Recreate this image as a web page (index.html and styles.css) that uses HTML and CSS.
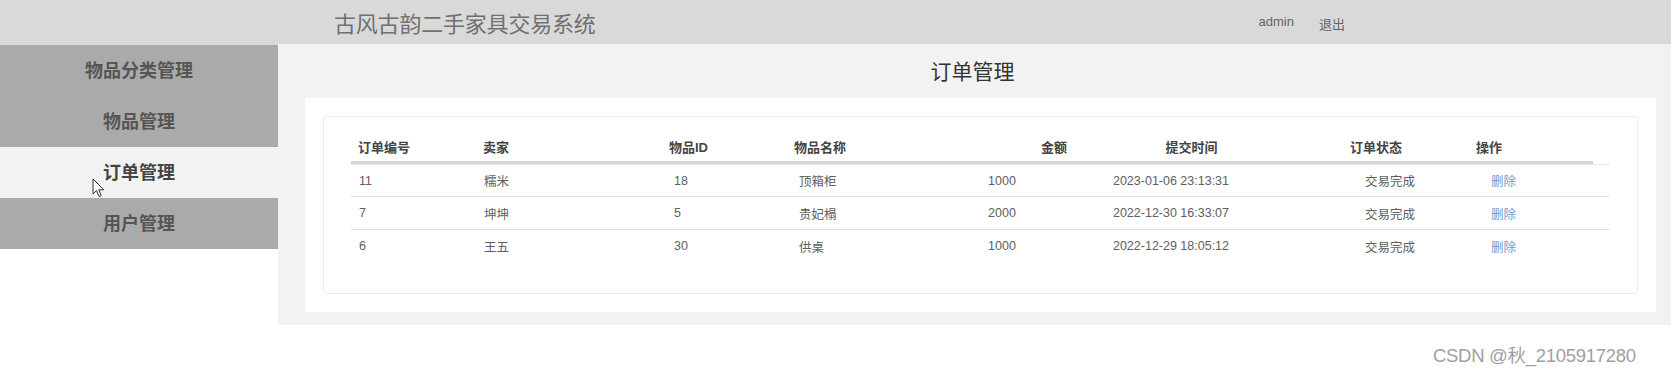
FILE: index.html
```html
<!DOCTYPE html>
<html lang="zh">
<head>
    <meta charset="UTF-8" />
    <meta name="viewport" content="width=device-width, initial-scale=1" />
    <title>订单管理 - 古风古韵二手家具交易系统</title>
    <link rel="stylesheet" href="styles.css">
</head>
<body>
    <div class="topbar">
        <div class="brand">古风古韵二手家具交易系统</div>
        <div class="user-nav">
            <a href="#" class="user">admin</a>
            <a href="#" class="logout">退出</a>
        </div>
    </div>

    <div class="layout">
        <ul class="side-menu">
            <li><a href="#">物品分类管理</a></li>
            <li><a href="#">物品管理</a></li>
            <li class="active"><a href="#">订单管理</a></li>
            <li><a href="#">用户管理</a></li>
        </ul>

        <div class="main">
            <h2 class="page-title">订单管理</h2>
            <div class="panel">
                <div class="card">
                    <div class="grid-head">
                        <div class="cell">订单编号</div>
                        <div class="cell">卖家</div>
                        <div class="cell">物品ID</div>
                        <div class="cell">物品名称</div>
                        <div class="cell center">金额</div>
                        <div class="cell center">提交时间</div>
                        <div class="cell center">订单状态</div>
                        <div class="cell flush">操作</div>
                    </div>
                    <div class="grid-body" id="order-rows">
                        <!-- 订单数据 -->
                    </div>
                </div>
            </div>
        </div>
    </div>

    <svg class="cursor" width="13" height="20" viewBox="0 0 13 20">
        <path d="M1 1 L1 16 L4.5 12.5 L7 18.5 L9.2 17.6 L6.8 11.8 L11.8 11.8 Z" fill="#fff" stroke="#333" stroke-width="1" stroke-linejoin="round"/>
    </svg>

    <div class="watermark">CSDN @秋_2105917280</div>

    <script>
        const pedidos = [
            { id: 11, seller: '糯米', goodsId: 18, name: '顶箱柜', price: 1000, time: '2023-01-06 23:13:31', state: '交易完成' },
            { id: 7, seller: '坤坤', goodsId: 5, name: '贵妃榻', price: 2000, time: '2022-12-30 16:33:07', state: '交易完成' },
            { id: 6, seller: '王五', goodsId: 30, name: '供桌', price: 1000, time: '2022-12-29 18:05:12', state: '交易完成' }
        ];

        const body = document.getElementById('order-rows');
        pedidos.forEach(o => {
            const row = document.createElement('div');
            row.className = 'row';
            row.innerHTML = `
                <div class="cell">${o.id}</div>
                <div class="cell">${o.seller}</div>
                <div class="cell">${o.goodsId}</div>
                <div class="cell">${o.name}</div>
                <div class="cell center">${o.price}</div>
                <div class="cell center">${o.time}</div>
                <div class="cell center">${o.state}</div>
                <div class="cell flush"><a href="#" class="del">删除</a></div>
            `;
            body.appendChild(row);
        });
    </script>
</body>
</html>
```

FILE: styles.css
```css
body {
    margin: 0;
    font-family: "Liberation Sans", "Noto Sans CJK SC", sans-serif;
    background: #fff;
    color: #555;
}
a {
    text-decoration: none;
    color: inherit;
}
.topbar {
    height: 44px;
    background: #d9d9d9;
    display: flex;
    align-items: center;
    padding: 0 326px 0 334px;
}
.brand {
    font-size: 22px;
    color: #707070;
    letter-spacing: -0.2px;
}
.user-nav {
    margin-left: auto;
    display: flex;
    gap: 25px;
    font-size: 13px;
    color: #666;
    padding-top: 2px;
}
.layout {
    display: flex;
    align-items: flex-start;
}
.side-menu {
    list-style: none;
    margin: 0;
    padding: 0;
    border-top: 1px solid #d9d9d9;
    width: 278px;
    flex-shrink: 0;
}
.side-menu li a {
    display: block;
    height: 51px;
    line-height: 52px;
    text-align: center;
    background: #aaaaaa;
    color: #555;
    font-size: 18px;
    font-weight: bold;
}
.side-menu li.active a {
    background: #f2f2f2;
    color: #444;
}
.main {
    flex: 1;
    background: #f2f2f2;
    padding: 0 16px 13px 27px;
}
.page-title {
    margin: 0;
    height: 54px;
    line-height: 56px;
    text-align: center;
    font-size: 21px;
    font-weight: normal;
    color: #333;
    padding-right: 16px;
}
.panel {
    background: #fff;
    padding: 18px;
}
.card {
    border: 1px solid #ececec;
    border-radius: 4px;
    padding: 15px 27px 31px 27px;
}
.grid-head {
    display: grid;
    grid-template-columns: 125px 186px 125px 214px 106px 169px 200px 117px;
    height: 29px;
    border-bottom: 3px solid #d8d8d8;
    margin-right: 17px;
    font-size: 13px;
    font-weight: bold;
    color: #444;
}
.grid-body {
    border-top: 1px solid #e4e4e4;
}
.row {
    display: grid;
    grid-template-columns: 125px 190px 125px 160px 102px 236px 202px 119px;
    height: 32px;
    font-size: 12.5px;
    color: #606060;
}
.row:first-child {
    height: 31px;
}
.row + .row {
    border-top: 1px solid #e2e2e2;
}
.cell {
    display: flex;
    align-items: center;
    padding-left: 7px;
    white-space: nowrap;
}
.row .cell {
    padding-left: 8px;
}
.cell.center, .row .cell.center {
    justify-content: center;
    padding-left: 0;
}
.cell.flush, .row .cell.flush {
    padding-left: 0;
}
.del {
    color: #7198cc;
}
.cursor {
    position: absolute;
    left: 92px;
    top: 178px;
}
.watermark {
    position: absolute;
    left: 1433px;
    top: 341px;
    font-size: 18.5px;
    color: #a0a0a0;
    letter-spacing: -0.3px;
}
```
